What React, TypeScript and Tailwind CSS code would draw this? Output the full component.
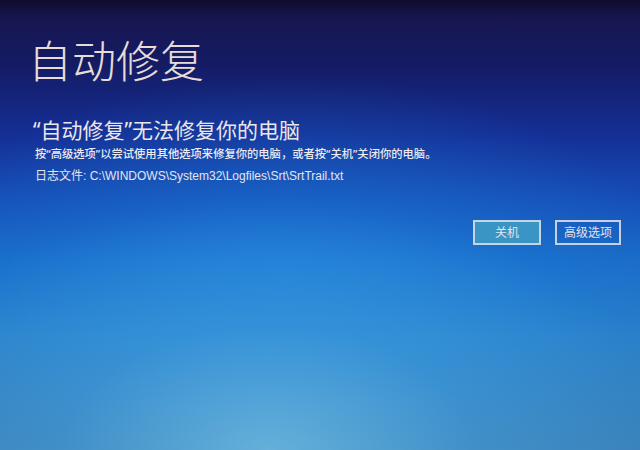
export default function App() {
    return (
        <div className="relative w-[640px] h-[450px] overflow-hidden bg-[radial-gradient(ellipse_65%_55%_at_42%_100%,rgba(120,195,230,0.7)_0%,rgba(80,170,225,0.35)_50%,rgba(40,140,220,0)_100%),radial-gradient(ellipse_60%_45%_at_45%_62%,rgba(30,140,230,0.5)_0%,rgba(30,120,220,0)_100%),linear-gradient(to_bottom,#0f0b2e_0%,#171650_4%,#141c66_15%,#142f96_30%,#1650b8_45%,#1a6cc8_58%,#2a80c8_75%,#3a80b8_100%)] font-['Noto_Sans','Noto_Sans_CJK_SC',sans-serif]">
            <div className="flex flex-col pl-[28px] pt-[33px]">
                <h1 className="text-[44px] leading-[56px] font-light text-[#e6dcd8]">
                    自动修复
                </h1>
                <div className="flex flex-col pl-[5px] pt-[27px]">
                    <p className="text-[21px] leading-[28px] text-[#ebe6ea]">
                        “自动修复”无法修复你的电脑
                    </p>
                    <p className="pl-[2px] pt-[1px] text-[11.3px] leading-[18px] font-medium text-[#eeeaee]">
                        按“高级选项”以尝试使用其他选项来修复你的电脑，或者按“关机”关闭你的电脑。
                    </p>
                    <p className="pl-[2px] pt-[4px] text-[12px] leading-[18px] text-[#e6e4ec] font-['Liberation_Sans','Noto_Sans_CJK_SC',sans-serif]">
                        日志文件: C:\WINDOWS\System32\Logfiles\Srt\SrtTrail.txt
                    </p>
                </div>
            </div>
            <div className="flex justify-end gap-[14px] pr-[19px] pt-[35px]">
                <button className="w-[68px] h-[25px] border-2 border-[#c4d6e2] bg-[#3a94c4] text-[12px] text-[#dfe8ee]">
                    关机
                </button>
                <button className="w-[66px] h-[25px] border-2 border-[#c8cfe0] bg-transparent text-[12px] text-[#e2e2ea]">
                    高级选项
                </button>
            </div>
        </div>
    );
}
